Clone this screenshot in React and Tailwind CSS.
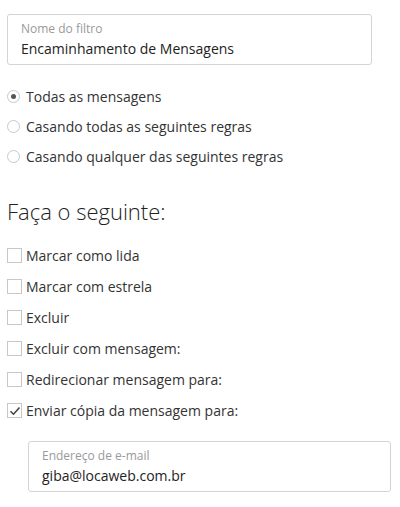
import React, { useState } from 'react';

const font = { fontFamily: '"Open Sans", "Noto Sans", sans-serif' };

const FloatingInput = ({ label, value, className }) => (
  <div className={`h-[51px] rounded-[3px] border border-[#d4d4d4] bg-white px-[13px] pt-[6px] ${className}`}>
    <div className="text-[12px] leading-[16px] text-[#9a9a9a]">{label}</div>
    <div className="mt-[1px] text-[14px] leading-[22px] text-[#222]">{value}</div>
  </div>
);

const Radio = ({ label, checked, onChange }) => (
  <label className="flex h-[30px] cursor-pointer items-center" onClick={onChange}>
    <span className="flex h-[13px] w-[13px] items-center justify-center rounded-full border border-[#c8c8c8] bg-white">
      {checked && <span className="h-[5px] w-[5px] rounded-full bg-[#555]" />}
    </span>
    <span className="ml-[6px] text-[14px] text-[#333]">{label}</span>
  </label>
);

const Checkbox = ({ label, checked, onChange }) => (
  <label className="flex h-[31px] cursor-pointer items-center" onClick={onChange}>
    <span className="flex h-[15px] w-[15px] items-center justify-center border border-[#c8c8c8] bg-white">
      {checked && (
        <svg width="12" height="10" viewBox="0 0 12 10" fill="none">
          <path d="M1.5 5.2 L4.5 8.2 L10.5 1.5" stroke="#444" strokeWidth="1.6" />
        </svg>
      )}
    </span>
    <span className="ml-[4px] text-[14px] text-[#333]">{label}</span>
  </label>
);

export default function App() {
  const [mode, setMode] = useState(0);
  const [actions, setActions] = useState([false, false, false, false, false, true]);

  const radios = ['Todas as mensagens', 'Casando todas as seguintes regras', 'Casando qualquer das seguintes regras'];
  const checks = [
    'Marcar como lida',
    'Marcar com estrela',
    'Excluir',
    'Excluir com mensagem:',
    'Redirecionar mensagem para:',
    'Enviar cópia da mensagem para:',
  ];

  const toggle = (i) => setActions(actions.map((a, j) => (j === i ? !a : a)));

  return (
    <div className="min-h-[507px] w-[400px] bg-white pl-[7px] pr-[9px] pt-[14px]" style={font}>
      <FloatingInput label="Nome do filtro" value="Encaminhamento de Mensagens" className="w-[365px]" />

      <div className="mt-[16px]">
        {radios.map((r, i) => (
          <Radio key={r} label={r} checked={mode === i} onChange={() => setMode(i)} />
        ))}
      </div>

      <h2 className="mt-[25px] text-[22px] font-light leading-[30px] text-[#222]">Faça o seguinte:</h2>

      <div className="mt-[14px]">
        {checks.map((c, i) => (
          <Checkbox key={c} label={c} checked={actions[i]} onChange={() => toggle(i)} />
        ))}
      </div>

      <FloatingInput label="Endereço de e-mail" value="giba@locaweb.com.br" className="ml-[21px] mt-[15px]" />
    </div>
  );
}
